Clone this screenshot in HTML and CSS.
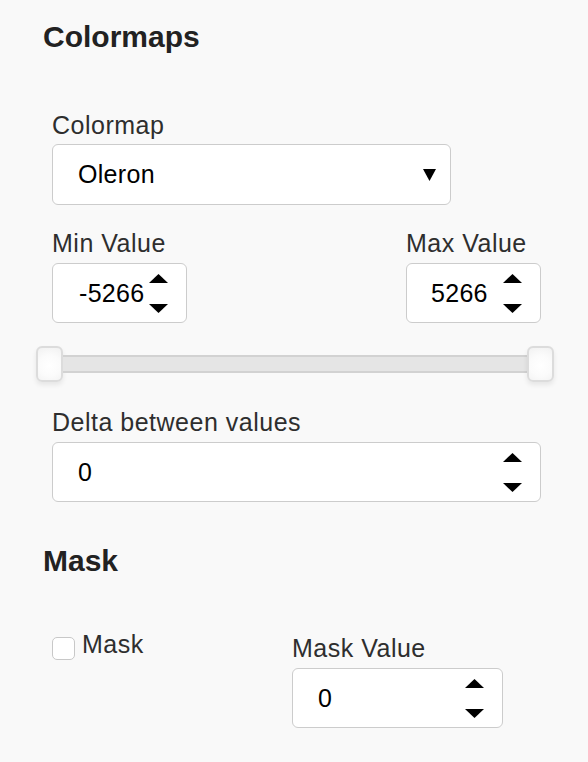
FILE: index.html
```html
<!DOCTYPE html>
<html>
<head>
<meta charset="utf-8">
<link rel="stylesheet" href="styles.css">
</head>
<body>
<div class="panel">
  <h4 class="heading heading-first">Colormaps</h4>

  <div class="group group-select">
    <div class="label">Colormap</div>
    <div class="select">
      <span class="value">Oleron</span>
      <svg class="caret" width="13" height="12" viewBox="0 0 13 12"><path d="M0 0H13L6.5 12Z" fill="#000"/></svg>
    </div>
  </div>

  <div class="group range-row">
    <div class="range-col">
      <div class="label">Min Value</div>
      <div class="numbox small">
        <span class="value">-5266</span>
        <span class="spin"><svg width="19" height="9" viewBox="0 0 19 9"><path d="M0 9L9.5 0L19 9Z" fill="#000"/></svg><svg width="19" height="9" viewBox="0 0 19 9"><path d="M0 0H19L9.5 9Z" fill="#000"/></svg></span>
      </div>
    </div>
    <div class="range-col">
      <div class="label">Max Value</div>
      <div class="numbox small">
        <span class="value">5266</span>
        <span class="spin"><svg width="19" height="9" viewBox="0 0 19 9"><path d="M0 9L9.5 0L19 9Z" fill="#000"/></svg><svg width="19" height="9" viewBox="0 0 19 9"><path d="M0 0H19L9.5 9Z" fill="#000"/></svg></span>
      </div>
    </div>
  </div>

  <div class="slider">
    <div class="handle"></div>
    <div class="track"></div>
    <div class="handle"></div>
  </div>

  <div class="group group-delta">
    <div class="label">Delta between values</div>
    <div class="numbox">
      <span class="value">0</span>
      <span class="spin"><svg width="19" height="9" viewBox="0 0 19 9"><path d="M0 9L9.5 0L19 9Z" fill="#000"/></svg><svg width="19" height="9" viewBox="0 0 19 9"><path d="M0 0H19L9.5 9Z" fill="#000"/></svg></span>
    </div>
  </div>

  <h4 class="heading heading-mask">Mask</h4>

  <div class="group mask-row">
    <label class="check">
      <span class="box"></span>
      <span class="check-text">Mask</span>
    </label>
    <div class="mask-value">
      <div class="label">Mask Value</div>
      <div class="numbox">
        <span class="value">0</span>
        <span class="spin"><svg width="19" height="9" viewBox="0 0 19 9"><path d="M0 9L9.5 0L19 9Z" fill="#000"/></svg><svg width="19" height="9" viewBox="0 0 19 9"><path d="M0 0H19L9.5 9Z" fill="#000"/></svg></span>
      </div>
    </div>
  </div>
</div>
</body>
</html>
```

FILE: styles.css
```css
html, body {
  margin: 0;
  padding: 0;
  background: #f9f9f9;
}

body {
  font-family: "Liberation Sans", Arial, sans-serif;
  color: #333;
}

.panel {
  padding: 0 47px 0 43px;
  width: 588px;
  box-sizing: border-box;
}

.heading {
  margin: 0;
  font-size: 30px;
  font-weight: bold;
  line-height: 34px;
  color: #222;
}

.heading-first {
  padding-top: 20px;
}

.heading-mask {
  margin-top: 42px;
}

.group {
  padding-left: 9px;
}

.group-select {
  margin-top: 56px;
}

.label {
  font-size: 25px;
  line-height: 30px;
  letter-spacing: 0.5px;
  color: #2e2e2e;
  margin-bottom: 4px;
  white-space: nowrap;
}

.select,
.numbox {
  height: 60px;
  box-sizing: border-box;
  border: 1px solid #cccccc;
  border-radius: 6px;
  background: #fff;
  display: flex;
  align-items: center;
  padding-left: 25px;
}

.select {
  height: 61px;
  width: 399px;
  padding-right: 14px;
  justify-content: space-between;
}

.value {
  font-size: 25px;
  letter-spacing: 0.3px;
  color: #000;
}

.caret {
  display: block;
}

.range-row {
  margin-top: 23px;
  display: flex;
  justify-content: space-between;
}

.range-col {
  width: 135px;
}

.range-col .label {
  margin-bottom: 5px;
}

.numbox {
  justify-content: space-between;
  padding-right: 18px;
}

.numbox.small {
  width: 135px;
  padding-left: 26px;
}

.range-col:last-child .numbox.small {
  padding-left: 24px;
}

.spin {
  display: flex;
  flex-direction: column;
  justify-content: space-between;
  align-self: stretch;
  padding: 10px 0 9px;
}

.spin svg {
  display: block;
}

.slider {
  margin: 23px -13px 0 -7px;
  display: flex;
  align-items: center;
  height: 36px;
}

.handle {
  width: 27px;
  height: 36px;
  box-sizing: border-box;
  border: 2px solid #dcdcdc;
  border-radius: 6px;
  background: radial-gradient(circle at 50% 55%, #ffffff 0%, #fbfbfb 50%, #f1f1f1 100%);
  box-shadow: 0 3px 5px rgba(0, 0, 0, 0.08);
  flex: none;
}

.track {
  flex: 1;
  height: 18px;
  box-sizing: border-box;
  background: #e5e5e5;
  border-top: 2px solid #d2d2d2;
  border-bottom: 2px solid #d2d2d2;
}

.group-delta {
  margin-top: 25px;
}

.group-delta .label {
  margin-bottom: 5px;
}

.mask-row {
  margin-top: 51px;
  display: grid;
  grid-template-columns: 240px 211px;
  align-items: start;
}

.check {
  display: flex;
  align-items: flex-start;
}

.box {
  width: 23px;
  height: 23px;
  box-sizing: border-box;
  border: 1px solid #c8c8c8;
  border-radius: 5px;
  background: #fff;
  margin-top: 8px;
  margin-right: 7px;
}

.check-text {
  font-size: 25px;
  line-height: 30px;
  letter-spacing: 0.5px;
  color: #2e2e2e;
}

.mask-value {
  padding-top: 4px;
}

.mask-value .label {
  margin-bottom: 5px;
}
```
